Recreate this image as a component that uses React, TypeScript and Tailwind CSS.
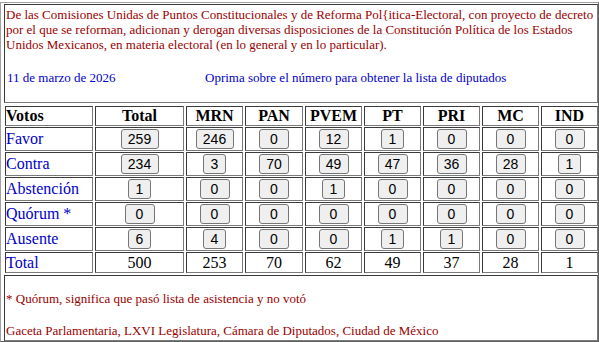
import React from "react";

const serif = { fontFamily: '"Liberation Serif", "Times New Roman", serif' };

const cols = ["Total", "MRN", "PAN", "PVEM", "PT", "PRI", "MC", "IND"];

const rows: { label: string; values: string[] }[] = [
  { label: "Favor", values: ["259", "246", "0", "12", "1", "0", "0", "0"] },
  { label: "Contra", values: ["234", "3", "70", "49", "47", "36", "28", "1"] },
  { label: "Abstención", values: ["1", "0", "0", "1", "0", "0", "0", "0"] },
  { label: "Quórum *", values: ["0", "0", "0", "0", "0", "0", "0", "0"] },
  { label: "Ausente", values: ["6", "4", "0", "0", "1", "1", "0", "0"] },
];

const totals = ["500", "253", "70", "62", "49", "37", "28", "1"];

const cellBorder =
  "border border-t-[#3a3a3a] border-l-[#3a3a3a] border-b-[#7a7a7a] border-r-[#7a7a7a]";

function btnWidth(v: string) {
  if (v === "0") return "w-[30px]";
  if (v.length === 1) return "w-[23px]";
  if (v.length === 2) return "w-[30px]";
  return "w-[38px]";
}

function VoteButton({ v }: { v: string }) {
  return (
    <button
      type="button"
      className={`${btnWidth(v)} h-[20px] rounded-[3px] border border-[#767676] bg-[#efefef] text-[14px] leading-none text-black flex items-center justify-center`}
      style={{ fontFamily: '"Liberation Sans", Arial, sans-serif' }}
    >
      {v}
    </button>
  );
}

export default function App() {
  return (
    <div className="w-[599px] h-[342px] bg-white overflow-hidden" style={serif}>
      <div className="mt-[2px] h-[340px] border border-t-[#a0a0a0] border-l-[#a0a0a0] border-b-[#606060] border-r-[#606060] pl-[3px] pt-[1px] flex flex-col">
        {/* Header cell */}
        <div className={`h-[99px] ${cellBorder} px-[1px] pt-[2px] text-[13px] leading-[15px]`}>
          <div className="flex flex-col text-[#990000] whitespace-nowrap">
            <span>
              De las Comisiones Unidas de Puntos Constitucionales y de Reforma Pol{"{"}itica-Electoral, con proyecto de decreto
            </span>
            <span>
              por el que se reforman, adicionan y derogan diversas disposiciones de la Constitución Política de los Estados
            </span>
            <span>Unidos Mexicanos, en materia electoral (en lo general y en lo particular).</span>
          </div>
          <div className="mt-[18px] flex text-[#0000cc] pl-[1px]">
            <span className="w-[198px]">11 de marzo de 2026</span>
            <span>Oprima sobre el número para obtener la lista de diputados</span>
          </div>
        </div>

        {/* Votes table */}
        <div className="ml-[1px] mt-[3px] grid grid-cols-[88px_89px_57px_58px_57px_57px_57px_57px_57px] grid-rows-[20px_24px_24px_24px_24px_24px_21px] gap-x-[2px] gap-y-[1px] text-[16px] leading-[18px]">
          <div className={`${cellBorder} font-bold text-black flex items-center`}>Votos</div>
          {cols.map((c) => (
            <div key={c} className={`${cellBorder} font-bold text-black flex items-center justify-center`}>
              {c}
            </div>
          ))}

          {rows.map((r) => (
            <React.Fragment key={r.label}>
              <div className={`${cellBorder} text-[#0000cc] flex items-center`}>{r.label}</div>
              {r.values.map((v, i) => (
                <div key={i} className={`${cellBorder} flex items-center justify-center`}>
                  <VoteButton v={v} />
                </div>
              ))}
            </React.Fragment>
          ))}

          <div className={`${cellBorder} text-[#0000cc] flex items-center`}>Total</div>
          {totals.map((t, i) => (
            <div key={i} className={`${cellBorder} text-black flex items-center justify-center`}>
              {t}
            </div>
          ))}
        </div>

        {/* Footer cell */}
        <div className={`mt-[2px] h-[66px] ${cellBorder} px-[1px] pt-[15px] text-[13px] leading-[15px] text-[#990000]`}>
          <p>* Quórum, significa que pasó lista de asistencia y no votó</p>
          <p className="mt-[17px]">Gaceta Parlamentaria, LXVI Legislatura, Cámara de Diputados, Ciudad de México</p>
        </div>
      </div>
    </div>
  );
}
